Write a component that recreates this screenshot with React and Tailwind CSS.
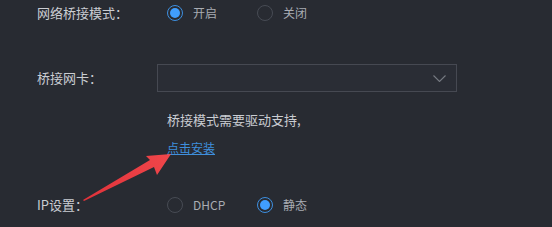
import React from "react";

function Radio({ checked, label }) {
  return (
    <div className="flex w-[90px] items-center gap-[10px]">
      {checked ? (
        <span className="flex h-[16px] w-[16px] items-center justify-center rounded-full border-[1.5px] border-[#3d8fe0]">
          <span className="h-[10px] w-[10px] rounded-full bg-[#409eff]" />
        </span>
      ) : (
        <span className="h-[16px] w-[16px] rounded-full border border-[#474b54]" />
      )}
      <span className="text-[12px] leading-[16px] text-[#a9acb3]">{label}</span>
    </div>
  );
}

export default function App() {
  return (
    <div
      className="relative h-[227px] w-[552px] overflow-hidden bg-[#282b32] pl-[37px]"
      style={{ fontFamily: '"Noto Sans CJK SC", "Noto Sans", sans-serif' }}
    >
      <div className="flex h-[25px] items-center">
        <div className="w-[120px] text-[13px] text-[#cacdd2]">网络桥接模式：</div>
        <div className="flex pl-[10px]">
          <Radio checked label="开启" />
          <Radio label="关闭" />
        </div>
      </div>

      <div className="mt-[39px] flex h-[28px] items-center">
        <div className="w-[120px] text-[13px] text-[#cacdd2]">桥接网卡：</div>
        <div className="flex h-[28px] w-[300px] items-center justify-end border border-[#464952] bg-[#2a2d35] pr-[10px]">
          <svg width="13" height="7" viewBox="0 0 13 7" fill="none">
            <path d="M0.5 0.5 L6.5 6.5 L12.5 0.5" stroke="#767a82" strokeWidth="1.1" />
          </svg>
        </div>
      </div>

      <div className="mt-[18px] pl-[130px] text-[13px] leading-[20px] text-[#cacdd2]">
        桥接模式需要驱动支持,
      </div>
      <div className="mt-[8px] pl-[130px] text-[12px] leading-[20px] text-[#3f8fdc] underline">
        点击安装
      </div>

      <div className="mt-[34px] flex h-[26px] items-center">
        <div className="w-[120px] text-[13px] text-[#cacdd2]">IP设置：</div>
        <div className="flex pl-[10px]">
          <Radio label="DHCP" />
          <Radio checked label="静态" />
        </div>
      </div>

      <svg
        className="pointer-events-none absolute left-0 top-0"
        width="552"
        height="227"
        viewBox="0 0 552 227"
      >
        <defs>
          <linearGradient id="ag" x1="83" y1="200" x2="170" y2="155" gradientUnits="userSpaceOnUse">
            <stop offset="0" stopColor="#e0323a" />
            <stop offset="1" stopColor="#f0464a" />
          </linearGradient>
        </defs>
        <polygon
          points="83,200 150,160 146,156 171,154 157,175 154,167 84,201"
          fill="url(#ag)"
        />
      </svg>
    </div>
  );
}
